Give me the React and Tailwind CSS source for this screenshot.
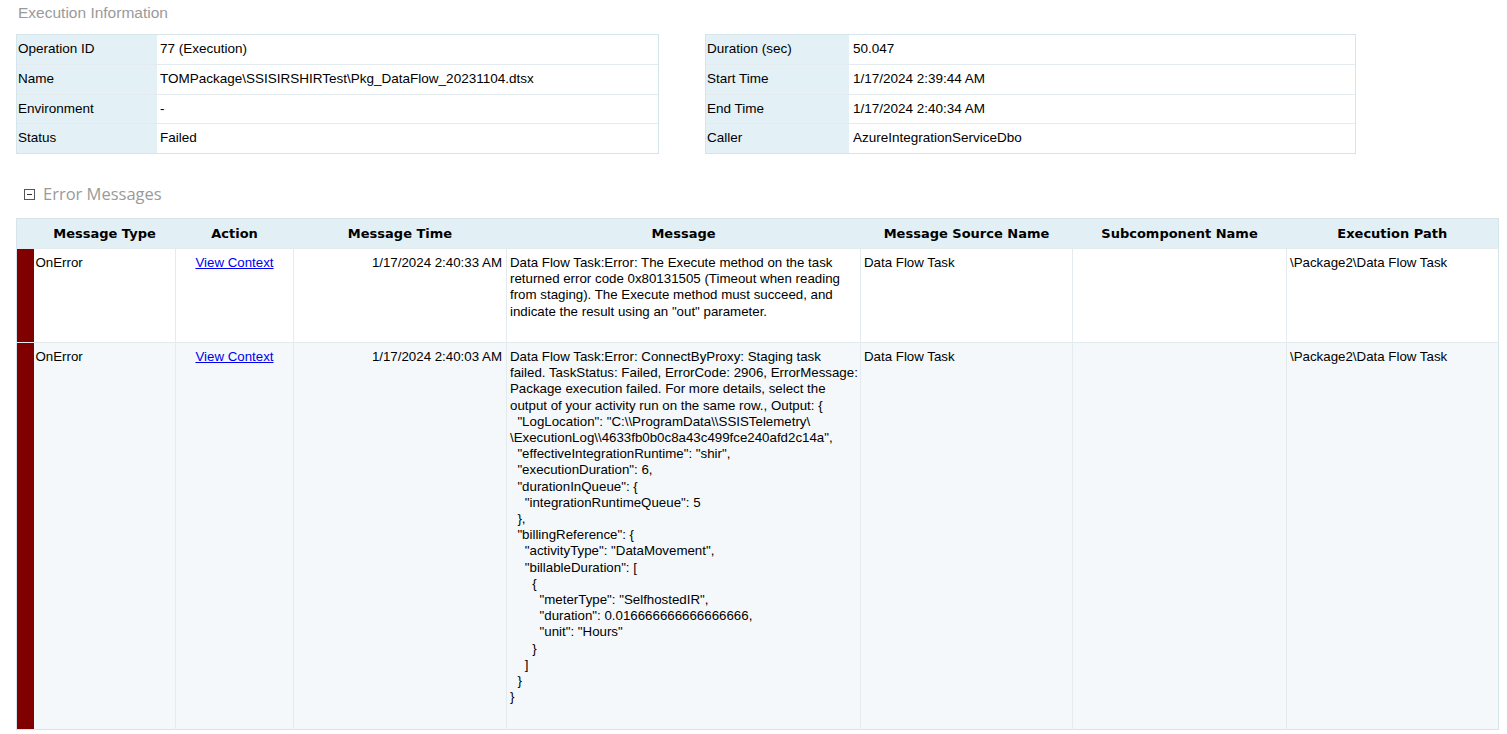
import React from 'react';

const infoLeft = [
  ['Operation ID', '77 (Execution)'],
  ['Name', 'TOMPackage\\SSISIRSHIRTest\\Pkg_DataFlow_20231104.dtsx'],
  ['Environment', '-'],
  ['Status', 'Failed'],
];

const infoRight = [
  ['Duration (sec)', '50.047'],
  ['Start Time', '1/17/2024 2:39:44 AM'],
  ['End Time', '1/17/2024 2:40:34 AM'],
  ['Caller', 'AzureIntegrationServiceDbo'],
];

const rowHeights = ['h-[30px]', 'h-[30px]', 'h-[29px]', 'h-[29px]'];

const msg1 = [
  'Data Flow Task:Error: The Execute method on the task',
  'returned error code 0x80131505 (Timeout when reading',
  'from staging). The Execute method must succeed, and',
  'indicate the result using an "out" parameter.',
];

const msg2 = [
  'Data Flow Task:Error: ConnectByProxy: Staging task',
  'failed. TaskStatus: Failed, ErrorCode: 2906, ErrorMessage:',
  'Package execution failed. For more details, select the',
  'output of your activity run on the same row., Output: {',
  '  "LogLocation": "C:\\\\ProgramData\\\\SSISTelemetry\\',
  '\\ExecutionLog\\\\4633fb0b0c8a43c499fce240afd2c14a",',
  '  "effectiveIntegrationRuntime": "shir",',
  '  "executionDuration": 6,',
  '  "durationInQueue": {',
  '    "integrationRuntimeQueue": 5',
  '  },',
  '  "billingReference": {',
  '    "activityType": "DataMovement",',
  '    "billableDuration": [',
  '      {',
  '        "meterType": "SelfhostedIR",',
  '        "duration": 0.016666666666666666,',
  '        "unit": "Hours"',
  '      }',
  '    ]',
  '  }',
  '}',
];

const rows = [
  { time: '1/17/2024 2:40:33 AM', lines: msg1, bg: 'bg-white', h: 'h-[94px]' },
  { time: '1/17/2024 2:40:03 AM', lines: msg2, bg: 'bg-[#f4f8fa]', h: 'h-[387px]' },
];

function InfoTable({ items, width, labelWidth, valuePad }) {
  return (
    <div className={`${width} border border-[#d6e5ec] text-[13.5px]`}>
      {items.map(([label, value], i) => (
        <div key={label} className={`flex ${rowHeights[i]} ${i < items.length - 1 ? 'border-b border-[#e3ebef]' : ''}`}>
          <div className={`${labelWidth} shrink-0 bg-[#e3f0f6] pl-[1px] flex items-center`}>{label}</div>
          <div className={`flex-1 bg-white ${valuePad} flex items-center`}>{value}</div>
        </div>
      ))}
    </div>
  );
}

export default function App() {
  const font = { fontFamily: '"Liberation Sans", Arial, sans-serif' };
  return (
    <div className="min-h-screen bg-white pl-4 text-[13.3px] text-black" style={font}>
      <div className="h-[34px] pt-[3px] pl-[2px] text-[15.5px] leading-[20px] text-[#9a9a9a]">
        Execution Information
      </div>

      <div className="flex gap-[46px]">
        <InfoTable items={infoLeft} width="w-[643px]" labelWidth="w-[140px]" valuePad="pl-[3px]" />
        <InfoTable items={infoRight} width="w-[651px]" labelWidth="w-[143px]" valuePad="pl-[4px]" />
      </div>

      <div className="mt-[30px] mb-[14px] h-[20px] flex items-center pl-[8px]">
        <div className="w-[11px] h-[11px] border border-[#555] flex items-center justify-center">
          <div className="w-[5px] h-[1px] bg-[#333]" />
        </div>
        <span className="ml-[8px] text-[16.5px] text-[#9a9a9a]" style={{ fontFamily: '"Open Sans", "Liberation Sans", sans-serif' }}>
          Error Messages
        </span>
      </div>

      <table className="table-fixed border-collapse w-[1482px] border border-[#d6e5ec]">
        <colgroup>
          <col className="w-[17px]" />
          <col className="w-[142px]" />
          <col className="w-[118px]" />
          <col className="w-[213px]" />
          <col className="w-[354px]" />
          <col className="w-[212px]" />
          <col className="w-[214px]" />
          <col className="w-[212px]" />
        </colgroup>
        <thead>
          <tr className="h-[30px] bg-[#e2eff5] text-[13px] font-bold" style={{ fontFamily: '"DejaVu Sans", Verdana, sans-serif' }}>
            <th />
            <th className="text-center font-bold">Message Type</th>
            <th className="text-center font-bold">Action</th>
            <th className="text-center font-bold">Message Time</th>
            <th className="text-center font-bold">Message</th>
            <th className="text-center font-bold">Message Source Name</th>
            <th className="text-center font-bold">Subcomponent Name</th>
            <th className="text-center font-bold">Execution Path</th>
          </tr>
        </thead>
        <tbody>
          {rows.map((r, i) => (
            <tr key={i} className={`${r.bg} ${r.h} align-top leading-[16.2px] border-t border-[#e3ebef]`}>
              <td className="bg-[#800000]" />
              <td className="pl-[2px] pt-[6px] border-r border-[#e3ebef]">OnError</td>
              <td className="pt-[6px] text-center border-r border-[#e3ebef]">
                <a href="#" className="text-[#0000ee] underline">View Context</a>
              </td>
              <td className="pt-[6px] pr-[4px] text-right border-r border-[#e3ebef]">{r.time}</td>
              <td className="pt-[6px] pl-[3px] border-r border-[#e3ebef] whitespace-pre">
                {r.lines.map((l, j) => (
                  <div key={j}>{l}</div>
                ))}
              </td>
              <td className="pt-[6px] pl-[3px] border-r border-[#e3ebef]">Data Flow Task</td>
              <td className="border-r border-[#e3ebef]" />
              <td className="pt-[6px] pl-[3px]">\Package2\Data Flow Task</td>
            </tr>
          ))}
        </tbody>
      </table>
    </div>
  );
}
